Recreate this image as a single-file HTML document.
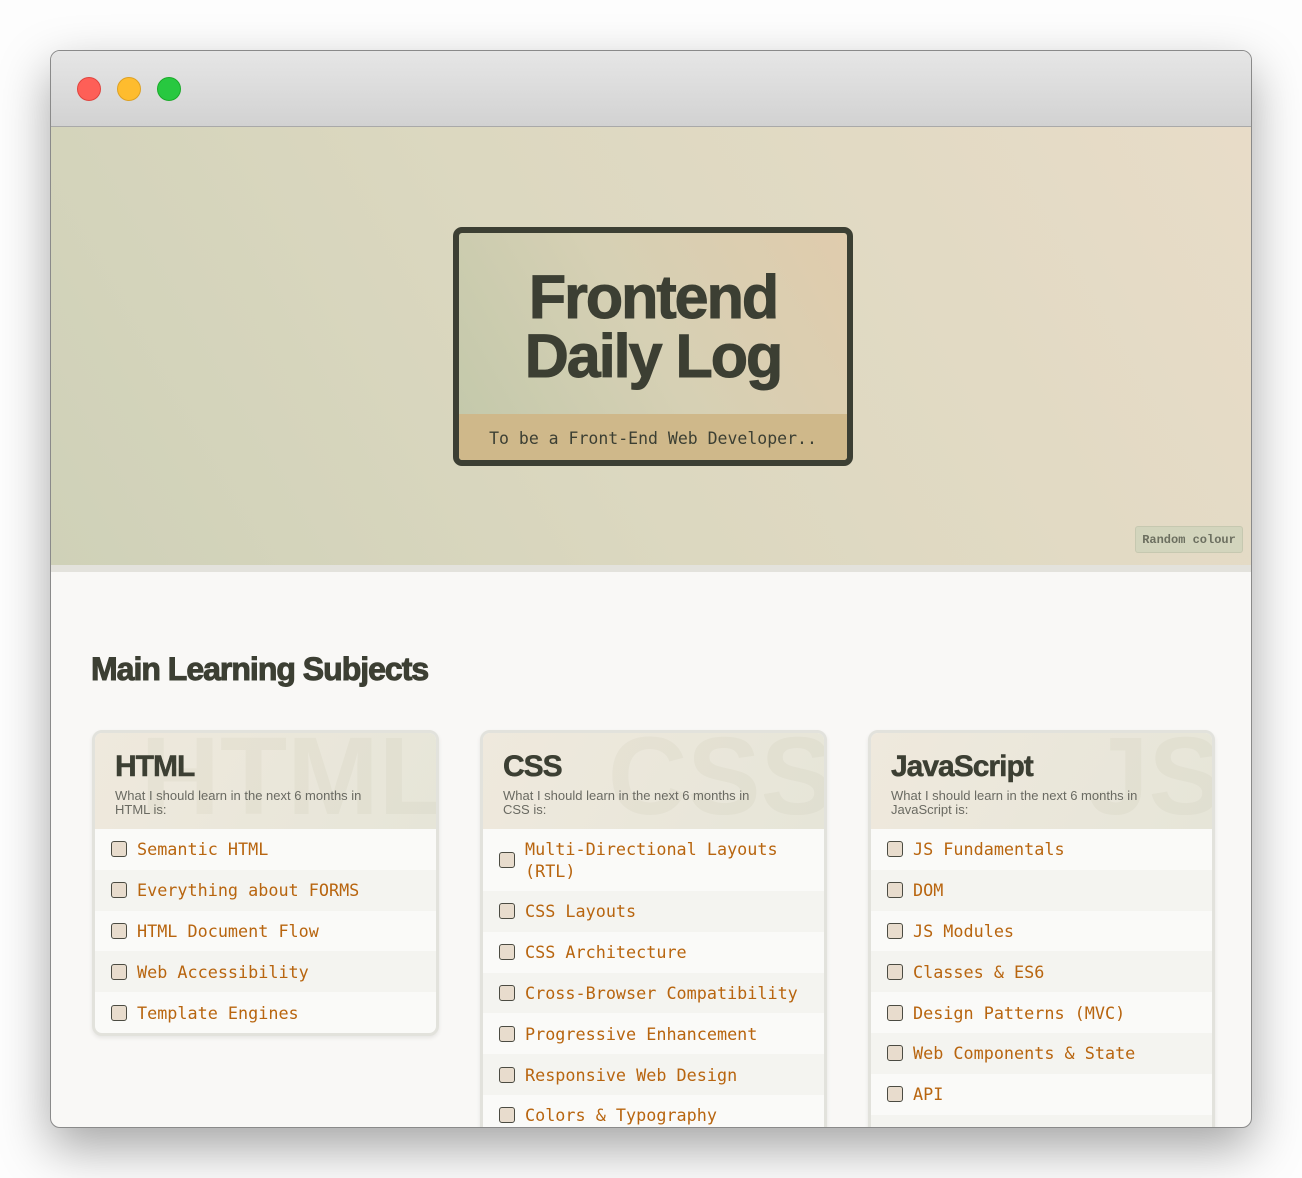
<!DOCTYPE html>
<html><head><meta charset="utf-8"><style>
*{box-sizing:border-box;margin:0;padding:0}
body{width:1302px;height:1178px;background:#fdfdfd;font-family:"Liberation Sans",sans-serif;position:relative;overflow:hidden}
.win{position:absolute;left:50px;top:50px;width:1202px;height:1078px;border-radius:10px;overflow:hidden;border:1px solid #8a8a8a;box-shadow:0 20px 50px rgba(0,0,0,.35);background:#f9f8f6}
.bar{height:76px;background:linear-gradient(#e6e6e6,#d2d2d2);border-bottom:1px solid #a9a9a9;position:relative}
.dot{position:absolute;top:26px;width:24px;height:24px;border-radius:50%}
.hero{height:445px;background:linear-gradient(60deg,#cfd1b8 0%,#dcd8c0 45%,#e8dcc8 100%);position:relative;border-bottom:7px solid #e3e2dc}
.box{position:absolute;left:402px;top:100px;width:400px;height:239px;border:6px solid #3c3f33;border-radius:9px;background:linear-gradient(60deg,#c2c8aa,#d6d0b4 50%,#e0ccad);overflow:hidden}
.box h1{font-size:61px;line-height:59px;font-weight:bold;color:#3c3f33;text-align:center;letter-spacing:-2px;margin-top:35px;-webkit-text-stroke:1px #3c3f33}
.sub{position:absolute;left:0;right:0;bottom:0;height:46px;background:#cfb88a;font-family:"DejaVu Sans Mono",monospace;font-size:16.5px;color:#3c3f33;text-align:center;line-height:50px}
.btn{position:absolute;right:8px;top:399px;width:108px;height:27px;border:1px solid #c6c8b0;border-radius:3px;background:#d3d5bd;font-family:"Liberation Mono",monospace;font-weight:bold;font-size:12px;color:#6c6f60;text-align:center;line-height:26px}
h2{position:absolute;left:40px;top:600px;font-size:32px;font-weight:bold;color:#3c3f33;letter-spacing:-1px;-webkit-text-stroke:1px #3c3f33}
.card{position:absolute;top:679px;width:347px;border:3px solid #e2e2dc;border-radius:10px;overflow:hidden;background:#fafaf8;box-shadow:0 2px 4px rgba(0,0,0,.08)}
.hd{height:96px;background:linear-gradient(120deg,#efe9dd,#e6e5d8);position:relative;padding:16px 0 0 20px;overflow:hidden}
.bg{position:absolute;right:-10px;top:-20px;font-size:110px;font-weight:bold;color:rgba(120,110,80,.05)}
.hd h3{position:relative;font-size:30px;color:#3c3f33;letter-spacing:-1px;line-height:36px;-webkit-text-stroke:.5px #3c3f33}
.hd p{position:relative;font-size:13px;color:#6a6a62;line-height:14px;margin-top:4px;width:250px}
.it{display:flex;align-items:center;min-height:40.8px;padding:9px 0 9px 16px;font-family:"DejaVu Sans Mono",monospace;font-size:16.8px;color:#b8650f;line-height:22px}
.it:nth-child(even){background:#f4f4f0}
.cb{flex:none;width:16px;height:16px;border:1.5px solid #4b4b42;border-radius:3px;background:#e8dccd;margin-right:10px}
</style></head><body>
<div class="win">
<div class="bar"><div class="dot" style="left:26px;background:#fe5f57;border:1px solid #e0443e"></div><div class="dot" style="left:66px;background:#febc2e;border:1px solid #dea123"></div><div class="dot" style="left:106px;background:#28c840;border:1px solid #1aab29"></div></div>
<div class="hero">
<div class="box"><h1>Frontend<br>Daily Log</h1><div class="sub">To be a Front-End Web Developer..</div></div>
<div class="btn">Random colour</div>
</div>
<h2>Main Learning Subjects</h2>
<div class="card" style="left:41px"><div class="hd"><div class="bg">HTML</div><h3>HTML</h3><p>What I should learn in the next 6 months in HTML is:</p></div>
<div><div class="it"><span class="cb"></span>Semantic HTML</div><div class="it"><span class="cb"></span>Everything about FORMS</div><div class="it"><span class="cb"></span>HTML Document Flow</div><div class="it"><span class="cb"></span>Web Accessibility</div><div class="it"><span class="cb"></span>Template Engines</div></div></div>
<div class="card" style="left:429px"><div class="hd"><div class="bg">CSS</div><h3>CSS</h3><p>What I should learn in the next 6 months in CSS is:</p></div>
<div><div class="it"><span class="cb"></span>Multi-Directional Layouts (RTL)</div><div class="it"><span class="cb"></span>CSS Layouts</div><div class="it"><span class="cb"></span>CSS Architecture</div><div class="it"><span class="cb"></span>Cross-Browser Compatibility</div><div class="it"><span class="cb"></span>Progressive Enhancement</div><div class="it"><span class="cb"></span>Responsive Web Design</div><div class="it"><span class="cb"></span>Colors &amp; Typography</div><div class="it"><span class="cb"></span>Animations</div></div></div>
<div class="card" style="left:817px"><div class="hd"><div class="bg">JS</div><h3>JavaScript</h3><p>What I should learn in the next 6 months in JavaScript is:</p></div>
<div><div class="it"><span class="cb"></span>JS Fundamentals</div><div class="it"><span class="cb"></span>DOM</div><div class="it"><span class="cb"></span>JS Modules</div><div class="it"><span class="cb"></span>Classes &amp; ES6</div><div class="it"><span class="cb"></span>Design Patterns (MVC)</div><div class="it"><span class="cb"></span>Web Components &amp; State</div><div class="it"><span class="cb"></span>API</div><div class="it"><span class="cb"></span>Web Storage API</div></div></div>
</div>
</body></html>
